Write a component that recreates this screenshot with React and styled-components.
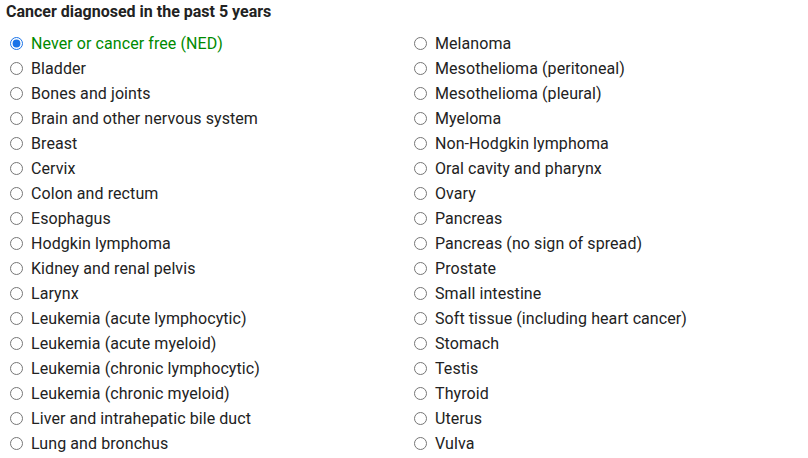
import React from 'react'
import styled, { createGlobalStyle } from 'styled-components'

const left = [
  'Never or cancer free (NED)',
  'Bladder',
  'Bones and joints',
  'Brain and other nervous system',
  'Breast',
  'Cervix',
  'Colon and rectum',
  'Esophagus',
  'Hodgkin lymphoma',
  'Kidney and renal pelvis',
  'Larynx',
  'Leukemia (acute lymphocytic)',
  'Leukemia (acute myeloid)',
  'Leukemia (chronic lymphocytic)',
  'Leukemia (chronic myeloid)',
  'Liver and intrahepatic bile duct',
  'Lung and bronchus',
]

const right = [
  'Melanoma',
  'Mesothelioma (peritoneal)',
  'Mesothelioma (pleural)',
  'Myeloma',
  'Non-Hodgkin lymphoma',
  'Oral cavity and pharynx',
  'Ovary',
  'Pancreas',
  'Pancreas (no sign of spread)',
  'Prostate',
  'Small intestine',
  'Soft tissue (including heart cancer)',
  'Stomach',
  'Testis',
  'Thyroid',
  'Uterus',
  'Vulva',
]

const GlobalStyle = createGlobalStyle`
  body {
    margin: 0;
    background: #fff;
    font-family: Roboto, "Liberation Sans", sans-serif;
  }
`

const App = () => {
  const [value, setValue] = React.useState(left[0])
  const renderColumn = (items) => (
    <Column>
      {items.map((item) => (
        <Option key={item} $checked={value === item}>
          <input
            type="radio"
            name="cancer"
            checked={value === item}
            onChange={() => setValue(item)}
          />
          <span>{item}</span>
        </Option>
      ))}
    </Column>
  )

  return (
    <>
      <GlobalStyle />
      <Wrap>
        <Title>Cancer diagnosed in the past 5 years</Title>
        <Columns>
          {renderColumn(left)}
          {renderColumn(right)}
        </Columns>
      </Wrap>
    </>
  )
}

const Wrap = styled.div`
  padding: 2px 6px 0 6px;
`

const Title = styled.div`
  font-size: 16px;
  font-weight: 700;
  color: #222;
  line-height: 20px;
  margin-bottom: 9px;
`

const Columns = styled.div`
  display: grid;
  grid-template-columns: 404px 1fr;
`

const Column = styled.div`
  display: flex;
  flex-direction: column;
`

const Option = styled.label`
  display: flex;
  align-items: center;
  height: 25px;
  font-size: 16px;
  letter-spacing: 0.08px;
  color: ${(p) => (p.$checked ? '#008a00' : '#222')};
  cursor: pointer;
  input {
    width: 13px;
    height: 13px;
    margin: 0 8px 0 4px;
    accent-color: #1a73e8;
  }
`

export default App
